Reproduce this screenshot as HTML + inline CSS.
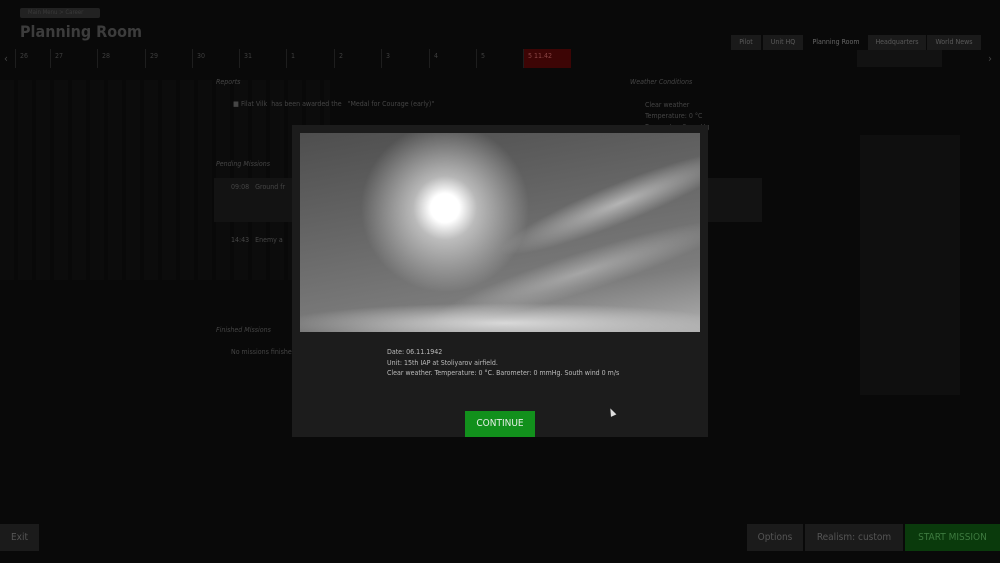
<!DOCTYPE html><html><head><style>
*{margin:0;padding:0;box-sizing:border-box}
body{width:1000px;height:563px;overflow:hidden;background:#090909;font-family:"DejaVu Sans Condensed","Liberation Sans",sans-serif;color:#555;position:relative}
.a{position:absolute}
.t{font-size:7px;color:#454545}
.tab{position:absolute;top:35px;height:15px;font-size:7px;color:#5a5a5a;background:#1a1a1a;text-align:center;line-height:15px}
.cell{position:absolute;top:49px;height:19px;border-left:1px solid #1e1e1e;font-size:7px;color:#3e3e3e;padding:3px 0 0 4px}
.btn{position:absolute;top:524px;height:27px;background:#1b1b1b;color:#555;font-size:10px;line-height:27px;text-align:center}
</style></head><body>
<div class="a" style="left:0;top:80px;width:330px;height:200px;background:repeating-linear-gradient(90deg,#0e0e0e 0 14px,#090909 14px 18px);opacity:.7"></div>
<div class="a" style="left:860px;top:135px;width:100px;height:260px;background:#0f0f0f"></div>
<div class="a" style="left:20px;top:8px;width:80px;height:10px;background:#222;border-radius:2px;font-size:6px;color:#3a3a3a;padding-left:8px;line-height:10px">Main Menu &gt; Career</div>
<div class="a" style="left:20px;top:22px;font-size:16px;font-weight:bold;color:#3c3c3c">Planning Room</div>
<div class="tab" style="left:731px;width:30px">Pilot</div>
<div class="tab" style="left:763px;width:40px">Unit HQ</div>
<div class="tab" style="left:805px;width:62px;background:transparent;color:#666">Planning Room</div>
<div class="tab" style="left:868px;width:58px">Headquarters</div>
<div class="tab" style="left:927px;width:54px">World News</div>
<div class="a t" style="left:4px;top:52px;font-size:11px">‹</div>
<div class="a t" style="left:988px;top:52px;font-size:11px">›</div>
<div class="cell" style="left:15px;width:35px">26</div>
<div class="cell" style="left:50px;width:47px">27</div>
<div class="cell" style="left:97px;width:48px">28</div>
<div class="cell" style="left:145px;width:47px">29</div>
<div class="cell" style="left:192px;width:47px">30</div>
<div class="cell" style="left:239px;width:47px">31</div>
<div class="cell" style="left:286px;width:48px">1</div>
<div class="cell" style="left:334px;width:47px">2</div>
<div class="cell" style="left:381px;width:48px">3</div>
<div class="cell" style="left:429px;width:47px">4</div>
<div class="cell" style="left:476px;width:47px">5</div>
<div class="cell" style="left:523px;width:48px;background:#3d0505;color:#844">5 11.42</div>
<div class="a" style="left:857px;top:50px;width:85px;height:17px;background:#121212"></div>
<div class="a t" style="left:216px;top:78px;font-style:italic">Reports</div>
<div class="a t" style="left:233px;top:100px">■ Filat Vilk &nbsp;has been awarded the &nbsp;&nbsp;"Medal for Courage (early)"</div>
<div class="a t" style="left:630px;top:78px;font-style:italic">Weather Conditions</div>
<div class="a t" style="left:645px;top:100px;line-height:11px">Clear weather<br>Temperature: 0 °C<br>Barometer: 0 mmHg</div>
<div class="a t" style="left:216px;top:160px;font-style:italic">Pending Missions</div>
<div class="a" style="left:214px;top:178px;width:548px;height:44px;background:#131313"></div>
<div class="a t" style="left:231px;top:183px">09:08 &nbsp; Ground fr</div>
<div class="a t" style="left:231px;top:236px">14:43 &nbsp; Enemy a</div>
<div class="a t" style="left:216px;top:326px;font-style:italic">Finished Missions</div>
<div class="a t" style="left:231px;top:348px">No missions finished</div>
<div class="a" style="left:292px;top:125px;width:416px;height:312px;background:#1c1c1c"></div>
<div class="a" style="left:300px;top:133px;width:400px;height:199px;overflow:hidden;background:linear-gradient(170deg,#4e4e4e 0%,#666 40%,#7c7c7c 75%,#b0b0b0 100%)">
<div class="a" style="left:40px;top:-25px;width:210px;height:200px;background:radial-gradient(circle at 50% 50%,#fff 0,#fff 10%,rgba(255,255,255,.55) 22%,rgba(255,255,255,0) 58%)"></div>
<div class="a" style="left:190px;top:50px;width:260px;height:40px;transform:rotate(-22deg);background:radial-gradient(ellipse,rgba(220,220,220,.65),rgba(200,200,200,0) 70%)"></div>
<div class="a" style="left:120px;top:120px;width:320px;height:40px;transform:rotate(-18deg);background:radial-gradient(ellipse,rgba(210,210,210,.5),rgba(200,200,200,0) 70%)"></div>
<div class="a" style="left:-20px;top:170px;width:450px;height:40px;background:radial-gradient(ellipse,rgba(235,235,235,.8),rgba(220,220,220,0) 70%)"></div>
</div>
<div class="a" style="left:387px;top:347px;font-size:7px;color:#bbb;line-height:10.5px">Date: 06.11.1942<br>Unit: 15th IAP at Stoliyarov airfield.<br>Clear weather. Temperature: 0 °C. Barometer: 0 mmHg. South wind 0 m/s</div>
<div class="a" style="left:465px;top:411px;width:70px;height:26px;background:#12901c;color:#e6f0e6;font-size:10px;line-height:26px;text-align:center">CONTINUE</div>
<div class="a" style="left:609px;top:408px;width:0;height:0;border-left:3px solid transparent;border-right:3px solid transparent;border-bottom:8px solid #ddd;transform:rotate(-25deg)"></div>
<div class="btn" style="left:0;width:39px">Exit</div>
<div class="btn" style="left:747px;width:56px">Options</div>
<div class="btn" style="left:805px;width:98px">Realism: custom</div>
<div class="btn" style="left:905px;width:95px;background:#0a3a0c;color:#3d7a3f">START MISSION</div>
</body></html>
